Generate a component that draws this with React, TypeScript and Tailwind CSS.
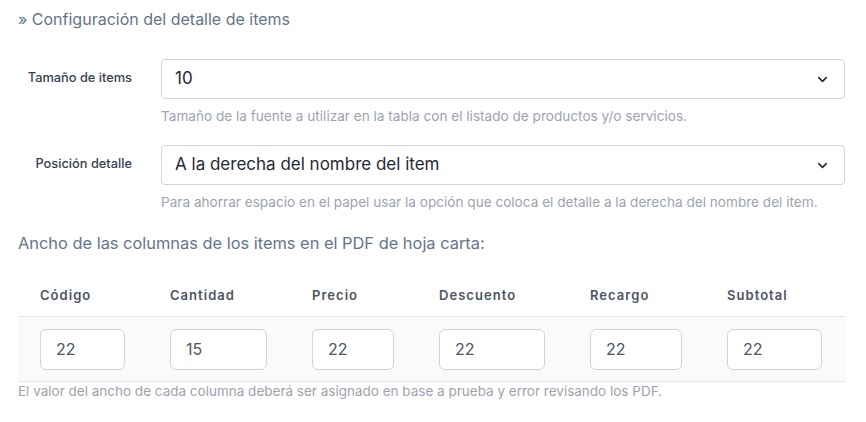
import { ChevronDown } from "lucide-react";

const columns = [
  { label: "Código", value: "22", width: "w-[130px]" },
  { label: "Cantidad", value: "15", width: "w-[142px]" },
  { label: "Precio", value: "22", width: "w-[127px]" },
  { label: "Descuento", value: "22", width: "w-[151px]" },
  { label: "Recargo", value: "22", width: "w-[137px]" },
  { label: "Subtotal", value: "22", width: "w-[140px]" },
];

function SelectRow({ label, value, help }: { label: string; value: string; help: string }) {
  return (
    <div className="flex items-start">
      <div className="w-[114px] shrink-0 pt-[9px] text-right text-[12.8px] leading-[20px] font-medium text-[#374151]">
        {label}
      </div>
      <div className="ml-[29px] flex-1">
        <div className="flex h-[40px] items-center justify-between rounded border border-[#d1d5db] bg-white pl-[13px] pr-[14px] text-[17px] text-[#1f2937]">
          <span>{value}</span>
          <ChevronDown className="h-[15px] w-[15px] text-[#1f2937]" strokeWidth={2.5} />
        </div>
        <div className="mt-[7px] whitespace-nowrap text-[13.6px] leading-[20px] text-[#9ca3af]">{help}</div>
      </div>
    </div>
  );
}

export default function App() {
  return (
    <div className="w-[866px] h-[422px] bg-white px-[18px] pt-[8px] font-['Inter',sans-serif] text-[#64748b]">
      <div className="text-[16px] leading-[22px]">» Configuración del detalle de items</div>

      <div className="mt-[29px] pr-[3px]">
        <SelectRow
          label="Tamaño de items"
          value="10"
          help="Tamaño de la fuente a utilizar en la tabla con el listado de productos y/o servicios."
        />
        <div className="mt-[19px]">
          <SelectRow
            label="Posición detalle"
            value="A la derecha del nombre del item"
            help="Para ahorrar espacio en el papel usar la opción que coloca el detalle a la derecha del nombre del item."
          />
        </div>
      </div>

      <div className="mt-[20px] text-[16.4px] leading-[22px] text-[#64748b]">
        Ancho de las columnas de los items en el PDF de hoja carta:
      </div>

      <div className="mt-[23px] w-[827px]">
        <div className="flex h-[40px] items-center border-b border-[#e2e8f0] pb-[2px]">
          {columns.map((c) => (
            <div key={c.label} className={`${c.width} pl-[22px] text-[13px] font-semibold tracking-[0.08em] text-[#4b5563]`}>
              {c.label}
            </div>
          ))}
        </div>
        <div className="flex h-[65px] items-center border-b border-[#e2e8f0] bg-[#f8fafc]">
          {columns.map((c) => (
            <div key={c.label} className={`${c.width} pl-[22px] pr-[23px]`}>
              <div className="flex h-[41px] items-center rounded-md border border-[#d1d5db] bg-white pl-[15px] text-[16px] text-[#4b5563]">
                {c.value}
              </div>
            </div>
          ))}
        </div>
      </div>

      <div className="whitespace-nowrap text-[13.5px] leading-[18px] text-[#9ca3af]">
        El valor del ancho de cada columna deberá ser asignado en base a prueba y error revisando los PDF.
      </div>
    </div>
  );
}
